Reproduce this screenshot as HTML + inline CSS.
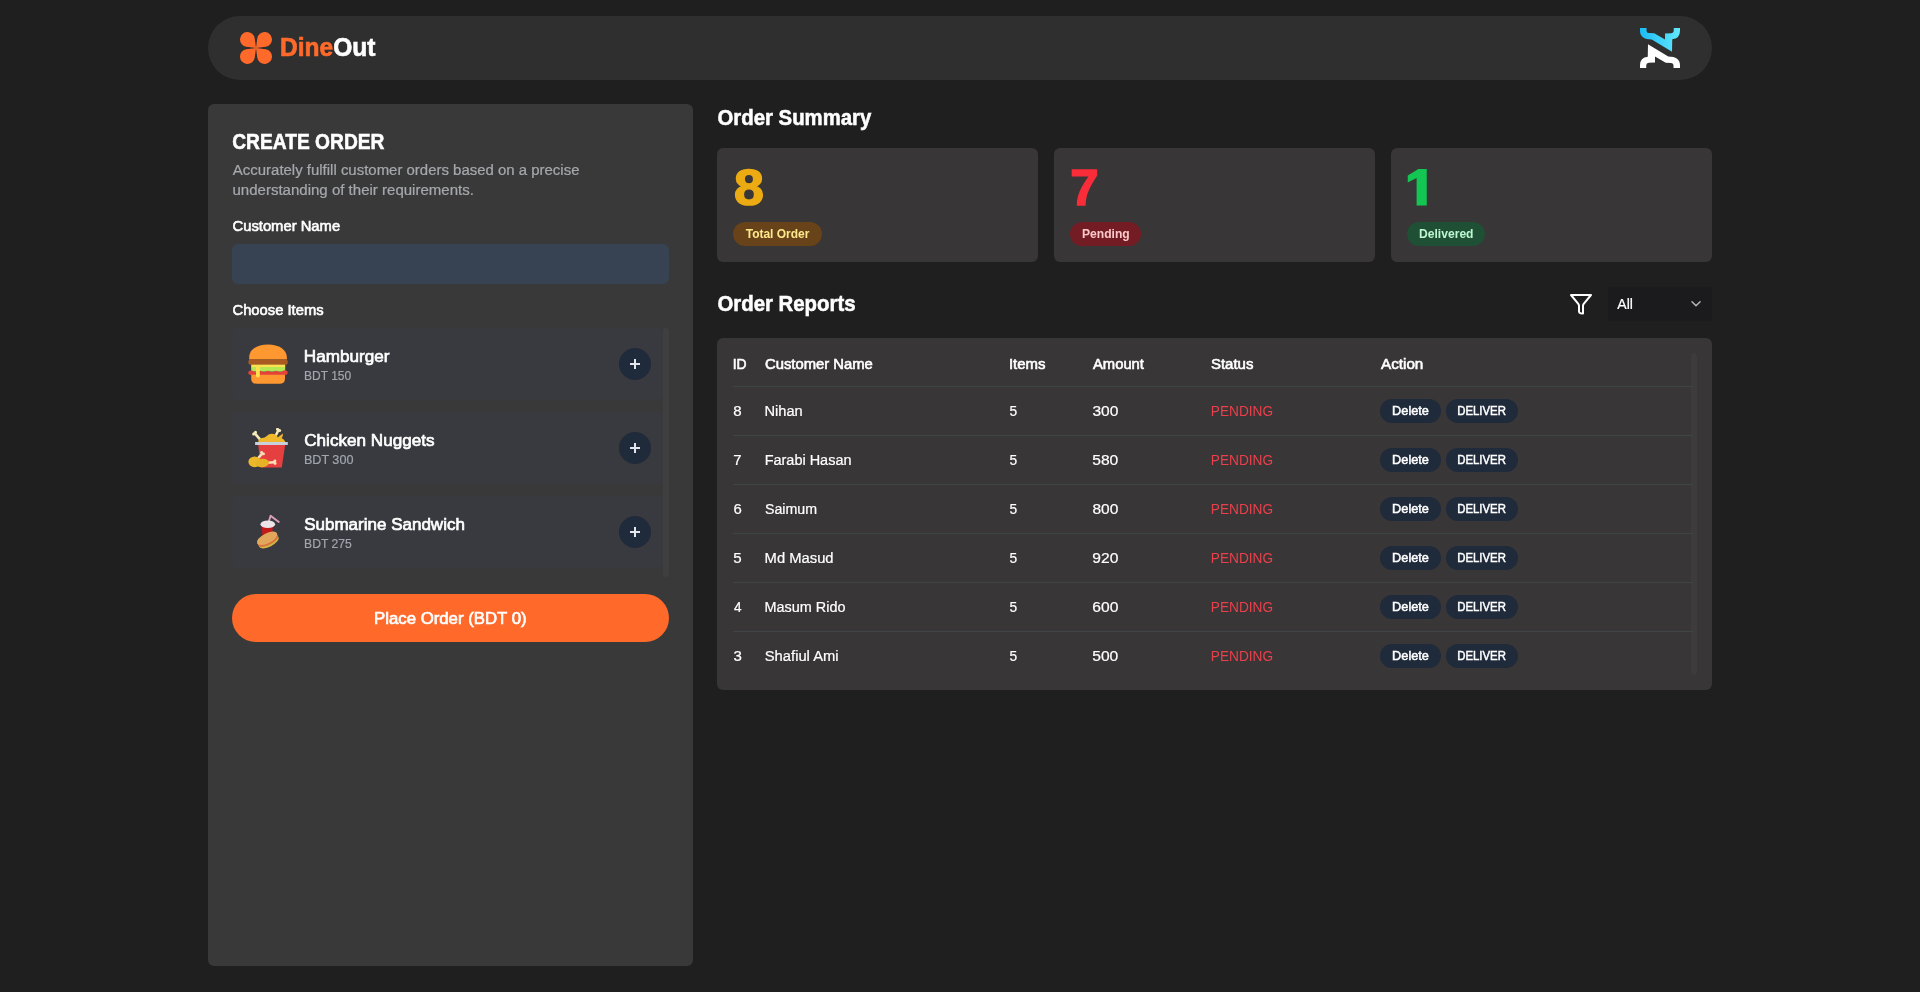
<!DOCTYPE html>
<html lang="en">
<head>
<meta charset="utf-8">
<title>DineOut</title>
<style>
*{box-sizing:border-box;margin:0;padding:0}
html,body{width:1920px;height:992px;overflow:hidden;background:#1f1f1f}
body{font-family:"Liberation Sans",sans-serif;color:#fff;position:relative}
.abs{position:absolute}
.t{position:absolute;left:0;white-space:nowrap;line-height:1;transform-origin:0 0}
#nav{left:208px;top:16px;width:1504px;height:64px;border-radius:32px;background:#302f2f}
#left{left:208px;top:104px;width:485px;height:862px;border-radius:6px;background:#393939}
.card{top:148px;width:321px;height:114px;border-radius:6px;background:#383636}
.badge{position:absolute;top:222px;height:24px;border-radius:12px}
#table{left:717px;top:338px;width:995px;height:352px;border-radius:6px;background:#383636}
.hl{position:absolute;left:733px;width:959px;height:1px;background:#3e4547}
.item{position:absolute;left:232px;width:431px;height:72px;border-radius:6px;background:#393a3f}
.plus{position:absolute;left:619px;width:32px;height:32px;border-radius:16px;background:#1f2a3a}
.plus:before{content:"";position:absolute;left:10.75px;top:15.35px;width:10.5px;height:1.3px;background:#e3e6ec}
.plus:after{content:"";position:absolute;left:15.35px;top:10.75px;width:1.3px;height:10.5px;background:#e3e6ec}
.btn{position:absolute;height:24px;border-radius:12px;background:#1f2a3a}
#text{position:absolute;left:0;top:0;width:1920px;height:992px;will-change:transform}
</style>
</head>
<body>
<!-- NAV -->
<div id="nav" class="abs"></div>
<svg class="abs" style="left:239.7px;top:32px" width="32" height="32" viewBox="0 0 32 32">
<g fill="#ff6a2b">
<path d="M16 16 L14.74 6.43 A7.4 7.4 0 1 0 6.43 14.74 Z"/>
<path d="M16 16 L14.74 6.43 A7.4 7.4 0 1 0 6.43 14.74 Z" transform="rotate(90 16 16)"/>
<path d="M16 16 L14.74 6.43 A7.4 7.4 0 1 0 6.43 14.74 Z" transform="rotate(180 16 16)"/>
<path d="M16 16 L14.74 6.43 A7.4 7.4 0 1 0 6.43 14.74 Z" transform="rotate(270 16 16)"/>
</g></svg>
<svg class="abs" style="left:1640px;top:28px" width="40" height="40" viewBox="0 0 40 40">
<defs><linearGradient id="bg" x1="0" y1="0" x2="1" y2="0"><stop offset="0" stop-color="#1cbcf7"/><stop offset="1" stop-color="#62e8fa"/></linearGradient></defs>
<path fill="url(#bg)" d="M0 0 H6.5 V2.75 Q6.5 5 8.75 5.1 L14.25 5.25 L25 11.5 V5.4 L31.25 5.25 Q33.75 5 33.75 2.75 V0 H40 V2.75 Q40 10.5 32.25 11.25 L32 23.75 L11.75 11.5 Q0 11.5 0 2.75 Z"/>
<path fill="#fff" transform="rotate(180 20 20)" d="M0 0 H6.5 V2.75 Q6.5 5 8.75 5.1 L14.25 5.25 L25 11.5 V5.4 L31.25 5.25 Q33.75 5 33.75 2.75 V0 H40 V2.75 Q40 10.5 32.25 11.25 L32 23.75 L11.75 11.5 Q0 11.5 0 2.75 Z"/>
</svg>
<!-- LEFT PANEL -->
<div id="left" class="abs"></div>
<div class="abs" style="left:232px;top:244px;width:437px;height:40px;border-radius:6px;background:#374252"></div>
<div class="abs" style="left:663px;top:328px;width:6px;height:249px;border-radius:3px;background:#3f3f40"></div>
<div class="item" style="top:328px"></div>
<div class="item" style="top:412px"></div>
<div class="item" style="top:496px"></div>
<div class="plus" style="top:348px"></div>
<div class="plus" style="top:432px"></div>
<div class="plus" style="top:516px"></div>
<div class="abs" style="left:232px;top:594px;width:437px;height:48px;border-radius:24px;background:#ff6a2b"></div>
<!-- burger -->
<svg class="abs" style="left:248px;top:344px" width="40" height="40" viewBox="0 0 40 40">
<path fill="#ff9830" d="M1.2 15.4 V13.5 C1.2 5.5 9 .4 20 .4 S38.9 5.5 38.9 13.5 V15.4 Z"/>
<rect x=".4" y="15.2" width="39.4" height="5.6" rx="2.6" fill="#a85a22"/>
<rect x="3.2" y="20.6" width="34" height="3" fill="#ffe04f"/>
<rect x="3.2" y="23" width="34" height="4.6" fill="#b5e653"/>
<path fill="#e5433a" d="M2.6 26.6 Q4.6 26.2 6.2 27.6 Q8.2 28.6 10 27.4 Q12 26 14 27.4 Q16 28.8 18 27.4 Q20 26 22 27.4 Q24 28.8 26 27.4 Q28 26 30 27.4 Q32 28.6 34 27.4 Q36 26 38 26.4 Q40 27 39.8 29 Q39.4 31 37 31 H3 Q.4 31 .2 29 Q.2 27 2.6 26.6 Z"/>
<path fill="#ff9830" d="M3.2 30.8 H37 V34.4 Q37 39.8 31.4 39.8 H8.8 Q3.2 39.8 3.2 34.4 Z"/>
<rect x="8" y="21" width="3.8" height="12.4" rx="1.9" fill="#ffe04f"/>
</svg>
<!-- chicken bucket -->
<svg class="abs" style="left:248px;top:428px" width="40" height="40" viewBox="0 0 40 40">
<g stroke="#f4ebb9" stroke-width="2.6" stroke-linecap="round"><path d="M6.6 5.2 L12 11.4"/><path d="M30.5 2 L27 9"/></g>
<g fill="#f4ebb9"><circle cx="7.5" cy="4.3" r="1.5"/><circle cx="5.6" cy="6" r="1.5"/><circle cx="31.6" cy="2.4" r="1.5"/><circle cx="29.5" cy="1.3" r="1.5"/></g>
<path fill="#f0b92c" d="M10.4 14.6 Q9.8 10.4 14 10 Q17 9.8 18.4 8.2 Q22 4.6 27.4 6.4 Q29.6 7.2 29.6 9.4 L35 5.6 Q35.2 8 33.6 10.2 Q37.2 11.8 37.2 14.6 Z"/>
<path fill="#e63f3f" d="M10.2 16.6 H37.2 L33.8 39.4 H12.8 Z"/>
<rect x="7.1" y="14" width="32.7" height="3" fill="#c8d0dc"/>
<g stroke="#f8dfba" stroke-width="2.5" stroke-linecap="round"><path d="M10.6 29.6 L14.2 25.6"/><path d="M19 34.8 L26.2 34.3"/></g>
<g fill="#f8dfba"><circle cx="13.6" cy="24.4" r="1.45"/><circle cx="15.5" cy="25.9" r="1.45"/><circle cx="26.9" cy="33" r="1.45"/><circle cx="27.1" cy="35.5" r="1.45"/></g>
<ellipse cx="6.6" cy="33.8" rx="6.2" ry="5.4" fill="#ecb72b"/>
<ellipse cx="14.2" cy="35" rx="6.8" ry="4.3" fill="#e8b227" transform="rotate(-6 14.2 35)"/>
</svg>
<!-- sandwich + drink -->
<svg class="abs" style="left:248px;top:512px" width="40" height="40" viewBox="0 0 40 40">
<path d="M20.4 10.8 L22.6 3.8 L30.8 10" fill="none" stroke="#dfa0ba" stroke-width="1.9" stroke-linecap="round" stroke-linejoin="round"/>
<path fill="#c11a1d" d="M13.4 13 H25 L24 24.6 H14.6 Z"/>
<ellipse cx="19.8" cy="12.2" rx="7.3" ry="3.8" fill="#ebe5e8"/>
<g transform="rotate(-27 19.6 27.4)">
<ellipse cx="19.6" cy="30.6" rx="10.6" ry="4.4" fill="#dca24e"/>
<ellipse cx="19.6" cy="29.8" rx="10.8" ry="4.4" fill="#c3c246"/>
<ellipse cx="19.6" cy="28.6" rx="11" ry="4.5" fill="#de6f3a"/>
<ellipse cx="19.6" cy="26.2" rx="11.2" ry="5" fill="#e0a75d"/>
</g>
</svg>
<!-- RIGHT -->
<div class="abs card" style="left:717px"></div>
<div class="abs card" style="left:1054px"></div>
<div class="abs card" style="left:1391px"></div>
<div class="badge" style="left:733px;width:89px;background:#684218"></div>
<div class="badge" style="left:1070px;width:71px;background:#731c24"></div>
<div class="badge" style="left:1407px;width:77.5px;background:#1f4f35"></div>
<svg class="abs" style="left:1569px;top:292px" width="24" height="24" viewBox="0 0 24 24" fill="none" stroke="#fff" stroke-width="2" stroke-linejoin="round" stroke-linecap="round"><path d="M2 3 H22 L14.7 11.8 Q14 12.7 14 13.8 V21.6 L11.6 21.2 Q10 20.8 10 19.4 V13.8 Q10 12.7 9.3 11.8 Z"/></svg>
<div class="abs" style="left:1608px;top:287px;width:104px;height:34px;border-radius:4px;background:#1b1b1d"></div>
<svg class="abs" style="left:1689px;top:298px" width="14" height="12" viewBox="0 0 14 12" fill="none" stroke="#b6b6b9" stroke-width="1.5" stroke-linecap="round" stroke-linejoin="round"><path d="M3 3.7 L7 7.8 L11.1 3.7"/></svg>
<svg class="abs" style="left:1400px;top:160px" width="40" height="52" viewBox="1400 160 40 52"><path fill="#13c553" d="M1426.75 168.9 V205.4 H1416.6 V178 L1407.75 182.4 V175.5 L1418.4 168.9 Z"/></svg>
<div id="table" class="abs"></div>
<div class="abs" style="left:1690.5px;top:353px;width:6px;height:322px;border-radius:3px;background:#3d3b3c"></div>
<div class="hl" style="top:386px"></div><div class="btn" style="left:1380px;top:399px;width:60.5px"></div><div class="btn" style="left:1445.5px;top:399px;width:72.5px"></div>
<div class="hl" style="top:435px"></div><div class="btn" style="left:1380px;top:448px;width:60.5px"></div><div class="btn" style="left:1445.5px;top:448px;width:72.5px"></div>
<div class="hl" style="top:484px"></div><div class="btn" style="left:1380px;top:497px;width:60.5px"></div><div class="btn" style="left:1445.5px;top:497px;width:72.5px"></div>
<div class="hl" style="top:533px"></div><div class="btn" style="left:1380px;top:546px;width:60.5px"></div><div class="btn" style="left:1445.5px;top:546px;width:72.5px"></div>
<div class="hl" style="top:582px"></div><div class="btn" style="left:1380px;top:595px;width:60.5px"></div><div class="btn" style="left:1445.5px;top:595px;width:72.5px"></div>
<div class="hl" style="top:631px"></div><div class="btn" style="left:1380px;top:644px;width:60.5px"></div><div class="btn" style="left:1445.5px;top:644px;width:72.5px"></div>

<div id="text">
<div class="t" style="top:35.00px;font-size:25.08px;color:#ff6a2b;transform:translateX(279.96px) scaleX(0.9799);font-weight:bold;-webkit-text-stroke:0.63px">Dine<span style="color:#fff">Out</span></div>
<div class="t" style="top:132.00px;font-size:21.4px;color:#fff;transform:translateX(232.25px) scaleX(0.8979);font-weight:bold;-webkit-text-stroke:0.54px">CREATE ORDER</div>
<div class="t" style="top:163.00px;font-size:14.63px;color:#a5a8ad;transform:translateX(232.85px) scaleX(1.0225);-webkit-text-stroke:0.22px">Accurately fulfill customer orders based on a precise</div>
<div class="t" style="top:183.00px;font-size:14.63px;color:#a5a8ad;transform:translateX(232.45px) scaleX(1.0278);-webkit-text-stroke:0.22px">understanding of their requirements.</div>
<div class="t" style="top:219.00px;font-size:14.63px;color:#fff;transform:translateX(232.48px) scaleX(1.0110);-webkit-text-stroke:0.59px">Customer Name</div>
<div class="t" style="top:303.00px;font-size:14.63px;color:#fff;transform:translateX(232.47px) scaleX(1.0100);-webkit-text-stroke:0.59px">Choose Items</div>
<div class="t" style="top:349.00px;font-size:16.72px;color:#fff;transform:translateX(303.85px) scaleX(1.0251);-webkit-text-stroke:0.67px">Hamburger</div>
<div class="t" style="top:370.00px;font-size:12.54px;color:#a2a6ae;transform:translateX(304.05px) scaleX(0.9577);-webkit-text-stroke:0.19px">BDT 150</div>
<div class="t" style="top:433.00px;font-size:16.72px;color:#fff;transform:translateX(304.21px) scaleX(1.0246);-webkit-text-stroke:0.67px">Chicken Nuggets</div>
<div class="t" style="top:454.00px;font-size:12.54px;color:#a2a6ae;transform:translateX(303.88px) scaleX(1.0062);-webkit-text-stroke:0.19px">BDT 300</div>
<div class="t" style="top:517.00px;font-size:16.72px;color:#fff;transform:translateX(304.20px) scaleX(1.0180);-webkit-text-stroke:0.67px">Submarine Sandwich</div>
<div class="t" style="top:538.00px;font-size:12.54px;color:#a2a6ae;transform:translateX(304.08px) scaleX(0.9656);-webkit-text-stroke:0.19px">BDT 275</div>
<div class="t" style="top:611.00px;font-size:16.72px;color:#fff;transform:translateX(374.00px) scaleX(1.0044);-webkit-text-stroke:0.67px">Place Order (BDT 0)</div>
<div class="t" style="top:108.00px;font-size:21.4px;color:#fff;transform:translateX(717.52px) scaleX(0.9515);font-weight:bold;-webkit-text-stroke:0.54px">Order Summary</div>
<div class="t" style="top:294.00px;font-size:21.4px;color:#fff;transform:translateX(717.42px) scaleX(0.9525);font-weight:bold;-webkit-text-stroke:0.54px">Order Reports</div>
<div class="t" style="top:163.00px;font-size:50.74px;color:#ecab13;transform:translateX(734.10px) scaleX(1.0610);font-weight:bold;-webkit-text-stroke:1.52px">8</div>
<div class="t" style="top:163.00px;font-size:50.74px;color:#f92d3a;transform:translateX(1070.25px) scaleX(1.0073);font-weight:bold;-webkit-text-stroke:1.52px">7</div>
<div class="t" style="top:228.00px;font-size:12.54px;color:#fde98b;transform:translateX(745.69px) scaleX(0.9573);font-weight:bold">Total Order</div>
<div class="t" style="top:228.00px;font-size:12.54px;color:#fdc9cc;transform:translateX(1082.04px) scaleX(0.9634);font-weight:bold">Pending</div>
<div class="t" style="top:228.00px;font-size:12.54px;color:#bbf7d0;transform:translateX(1419.04px) scaleX(0.9651);font-weight:bold">Delivered</div>
<div class="t" style="top:297.00px;font-size:14.63px;color:#fff;transform:translateX(1617.35px) scaleX(0.9626);-webkit-text-stroke:0.22px">All</div>
<div class="t" style="top:357.00px;font-size:14.8px;color:#fff;transform:translateX(732.63px) scaleX(0.9396);-webkit-text-stroke:0.59px">ID</div>
<div class="t" style="top:357.00px;font-size:14.63px;color:#fff;transform:translateX(764.93px) scaleX(1.0135);-webkit-text-stroke:0.59px">Customer Name</div>
<div class="t" style="top:357.00px;font-size:14.63px;color:#fff;transform:translateX(1008.91px) scaleX(1.0249);-webkit-text-stroke:0.59px">Items</div>
<div class="t" style="top:357.00px;font-size:14.63px;color:#fff;transform:translateX(1092.92px) scaleX(1.0130);-webkit-text-stroke:0.59px">Amount</div>
<div class="t" style="top:357.00px;font-size:14.63px;color:#fff;transform:translateX(1210.90px) scaleX(1.0244);-webkit-text-stroke:0.59px">Status</div>
<div class="t" style="top:357.00px;font-size:14.63px;color:#fff;transform:translateX(1380.95px) scaleX(1.0434);-webkit-text-stroke:0.59px">Action</div>
<div class="t" style="top:404.00px;font-size:14.8px;color:#fff;transform:translateX(733.33px) scaleX(1.0163);-webkit-text-stroke:0.22px">8</div>
<div class="t" style="top:404.00px;font-size:14.63px;color:#fff;transform:translateX(764.46px) scaleX(1.0023);-webkit-text-stroke:0.22px">Nihan</div>
<div class="t" style="top:404.00px;font-size:14.8px;color:#fff;transform:translateX(1009.46px) scaleX(0.9289);-webkit-text-stroke:0.22px">5</div>
<div class="t" style="top:404.00px;font-size:14.8px;color:#fff;transform:translateX(1092.41px) scaleX(1.0498);-webkit-text-stroke:0.22px">300</div>
<div class="t" style="top:404.00px;font-size:14.8px;color:#e9404b;transform:translateX(1210.79px) scaleX(0.9234)">PENDING</div>
<div class="t" style="top:405.00px;font-size:12.54px;color:#fff;transform:translateX(1392.09px) scaleX(1.0170);-webkit-text-stroke:0.50px">Delete</div>
<div class="t" style="top:405.00px;font-size:12.68px;color:#fff;transform:translateX(1457.19px) scaleX(0.8988);-webkit-text-stroke:0.51px">DELIVER</div>
<div class="t" style="top:453.00px;font-size:14.8px;color:#fff;transform:translateX(733.17px) scaleX(1.0144);-webkit-text-stroke:0.22px">7</div>
<div class="t" style="top:453.00px;font-size:14.63px;color:#fff;transform:translateX(764.64px) scaleX(0.9890);-webkit-text-stroke:0.22px">Farabi Hasan</div>
<div class="t" style="top:453.00px;font-size:14.8px;color:#fff;transform:translateX(1009.46px) scaleX(0.9289);-webkit-text-stroke:0.22px">5</div>
<div class="t" style="top:453.00px;font-size:14.8px;color:#fff;transform:translateX(1092.21px) scaleX(1.0548);-webkit-text-stroke:0.22px">580</div>
<div class="t" style="top:453.00px;font-size:14.8px;color:#e9404b;transform:translateX(1210.79px) scaleX(0.9234)">PENDING</div>
<div class="t" style="top:454.00px;font-size:12.54px;color:#fff;transform:translateX(1392.09px) scaleX(1.0170);-webkit-text-stroke:0.50px">Delete</div>
<div class="t" style="top:454.00px;font-size:12.68px;color:#fff;transform:translateX(1457.19px) scaleX(0.8988);-webkit-text-stroke:0.51px">DELIVER</div>
<div class="t" style="top:502.00px;font-size:14.8px;color:#fff;transform:translateX(733.39px) scaleX(1.0066);-webkit-text-stroke:0.22px">6</div>
<div class="t" style="top:502.00px;font-size:14.63px;color:#fff;transform:translateX(764.92px) scaleX(0.9721);-webkit-text-stroke:0.22px">Saimum</div>
<div class="t" style="top:502.00px;font-size:14.8px;color:#fff;transform:translateX(1009.46px) scaleX(0.9289);-webkit-text-stroke:0.22px">5</div>
<div class="t" style="top:502.00px;font-size:14.8px;color:#fff;transform:translateX(1092.45px) scaleX(1.0470);-webkit-text-stroke:0.22px">800</div>
<div class="t" style="top:502.00px;font-size:14.8px;color:#e9404b;transform:translateX(1210.79px) scaleX(0.9234)">PENDING</div>
<div class="t" style="top:503.00px;font-size:12.54px;color:#fff;transform:translateX(1392.09px) scaleX(1.0170);-webkit-text-stroke:0.50px">Delete</div>
<div class="t" style="top:503.00px;font-size:12.68px;color:#fff;transform:translateX(1457.19px) scaleX(0.8988);-webkit-text-stroke:0.51px">DELIVER</div>
<div class="t" style="top:551.00px;font-size:14.8px;color:#fff;transform:translateX(733.14px) scaleX(1.0183);-webkit-text-stroke:0.22px">5</div>
<div class="t" style="top:551.00px;font-size:14.63px;color:#fff;transform:translateX(764.58px) scaleX(1.0106);-webkit-text-stroke:0.22px">Md Masud</div>
<div class="t" style="top:551.00px;font-size:14.8px;color:#fff;transform:translateX(1009.46px) scaleX(0.9289);-webkit-text-stroke:0.22px">5</div>
<div class="t" style="top:551.00px;font-size:14.8px;color:#fff;transform:translateX(1092.32px) scaleX(1.0528);-webkit-text-stroke:0.22px">920</div>
<div class="t" style="top:551.00px;font-size:14.8px;color:#e9404b;transform:translateX(1210.79px) scaleX(0.9234)">PENDING</div>
<div class="t" style="top:552.00px;font-size:12.54px;color:#fff;transform:translateX(1392.09px) scaleX(1.0170);-webkit-text-stroke:0.50px">Delete</div>
<div class="t" style="top:552.00px;font-size:12.68px;color:#fff;transform:translateX(1457.19px) scaleX(0.8988);-webkit-text-stroke:0.51px">DELIVER</div>
<div class="t" style="top:600.00px;font-size:14.8px;color:#fff;transform:translateX(733.96px) scaleX(0.9163);-webkit-text-stroke:0.22px">4</div>
<div class="t" style="top:600.00px;font-size:14.63px;color:#fff;transform:translateX(764.57px) scaleX(0.9857);-webkit-text-stroke:0.22px">Masum Rido</div>
<div class="t" style="top:600.00px;font-size:14.8px;color:#fff;transform:translateX(1009.46px) scaleX(0.9289);-webkit-text-stroke:0.22px">5</div>
<div class="t" style="top:600.00px;font-size:14.8px;color:#fff;transform:translateX(1092.26px) scaleX(1.0558);-webkit-text-stroke:0.22px">600</div>
<div class="t" style="top:600.00px;font-size:14.8px;color:#e9404b;transform:translateX(1210.79px) scaleX(0.9234)">PENDING</div>
<div class="t" style="top:601.00px;font-size:12.54px;color:#fff;transform:translateX(1392.09px) scaleX(1.0170);-webkit-text-stroke:0.50px">Delete</div>
<div class="t" style="top:601.00px;font-size:12.68px;color:#fff;transform:translateX(1457.19px) scaleX(0.8988);-webkit-text-stroke:0.51px">DELIVER</div>
<div class="t" style="top:649.00px;font-size:14.8px;color:#fff;transform:translateX(733.57px) scaleX(1.0135);-webkit-text-stroke:0.22px">3</div>
<div class="t" style="top:649.00px;font-size:14.63px;color:#fff;transform:translateX(764.77px) scaleX(1.0091);-webkit-text-stroke:0.22px">Shafiul Ami</div>
<div class="t" style="top:649.00px;font-size:14.8px;color:#fff;transform:translateX(1009.46px) scaleX(0.9289);-webkit-text-stroke:0.22px">5</div>
<div class="t" style="top:649.00px;font-size:14.8px;color:#fff;transform:translateX(1092.21px) scaleX(1.0548);-webkit-text-stroke:0.22px">500</div>
<div class="t" style="top:649.00px;font-size:14.8px;color:#e9404b;transform:translateX(1210.79px) scaleX(0.9234)">PENDING</div>
<div class="t" style="top:650.00px;font-size:12.54px;color:#fff;transform:translateX(1392.09px) scaleX(1.0170);-webkit-text-stroke:0.50px">Delete</div>
<div class="t" style="top:650.00px;font-size:12.68px;color:#fff;transform:translateX(1457.19px) scaleX(0.8988);-webkit-text-stroke:0.51px">DELIVER</div>
</div>
</body>
</html>
